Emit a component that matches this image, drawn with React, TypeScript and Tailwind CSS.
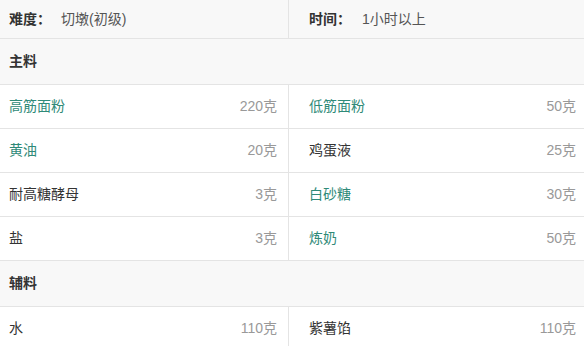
import React from 'react';

interface Item {
  name: string;
  amount: string;
  link?: boolean;
}

// pairs of ingredients, one row each
const MAIN: [Item, Item][] = [
  [{ name: '高筋面粉', amount: '220克', link: true }, { name: '低筋面粉', amount: '50克', link: true }],
  [{ name: '黄油', amount: '20克', link: true }, { name: '鸡蛋液', amount: '25克' }],
  [{ name: '耐高糖酵母', amount: '3克' }, { name: '白砂糖', amount: '30克', link: true }],
  [{ name: '盐', amount: '3克' }, { name: '炼奶', amount: '50克', link: true }],
];

const EXTRA: [Item, Item][] = [
  [{ name: '水', amount: '110克' }, { name: '紫薯馅', amount: '110克' }],
];

function Cell({ item, side }: { item: Item; side: 'l' | 'r' }) {
  return (
    <div
      className={
        side === 'l'
          ? 'flex w-[289px] shrink-0 items-center justify-between border-r border-[#e4e4e4] pl-[9px] pr-[11px]'
          : 'flex flex-1 items-center justify-between pl-[20px] pr-[8px]'
      }
    >
      <span className={item.link ? 'text-[#2f8a78]' : 'text-[#333]'}>{item.name}</span>
      <span className="text-[#999]">{item.amount}</span>
    </div>
  );
}

function Section({ title, rows }: { title: string; rows: [Item, Item][] }) {
  return (
    <>
      <div className="flex h-[46px] items-center border-b border-[#e4e4e4] bg-[#f8f8f8] pl-[9px] font-bold text-[#333]">
        {title}
      </div>
      {rows.map((r, i) => (
        <div key={i} className="flex h-[44px] border-b border-[#e4e4e4] bg-white">
          <Cell item={r[0]} side="l" />
          <Cell item={r[1]} side="r" />
        </div>
      ))}
    </>
  );
}

export default function App() {
  return (
    <div
      className="h-[346px] w-[584px] overflow-hidden bg-white text-[14px]"
      style={{ fontFamily: '"Liberation Sans", "Noto Sans CJK SC", sans-serif' }}
    >
      {/* difficulty / time */}
      <div className="flex h-[39px] border-b border-[#e4e4e4] bg-[#f8f8f8]">
        <div className="flex w-[289px] shrink-0 items-center border-r border-[#e4e4e4] pl-[9px]">
          <span className="w-[52px] font-bold text-[#333]">难度：</span>
          <span className="text-[#555]">切墩(初级)</span>
        </div>
        <div className="flex flex-1 items-center pl-[20px]">
          <span className="w-[53px] font-bold text-[#333]">时间：</span>
          <span className="text-[#555]">1小时以上</span>
        </div>
      </div>

      <Section title="主料" rows={MAIN} />
      <Section title="辅料" rows={EXTRA} />
    </div>
  );
}
